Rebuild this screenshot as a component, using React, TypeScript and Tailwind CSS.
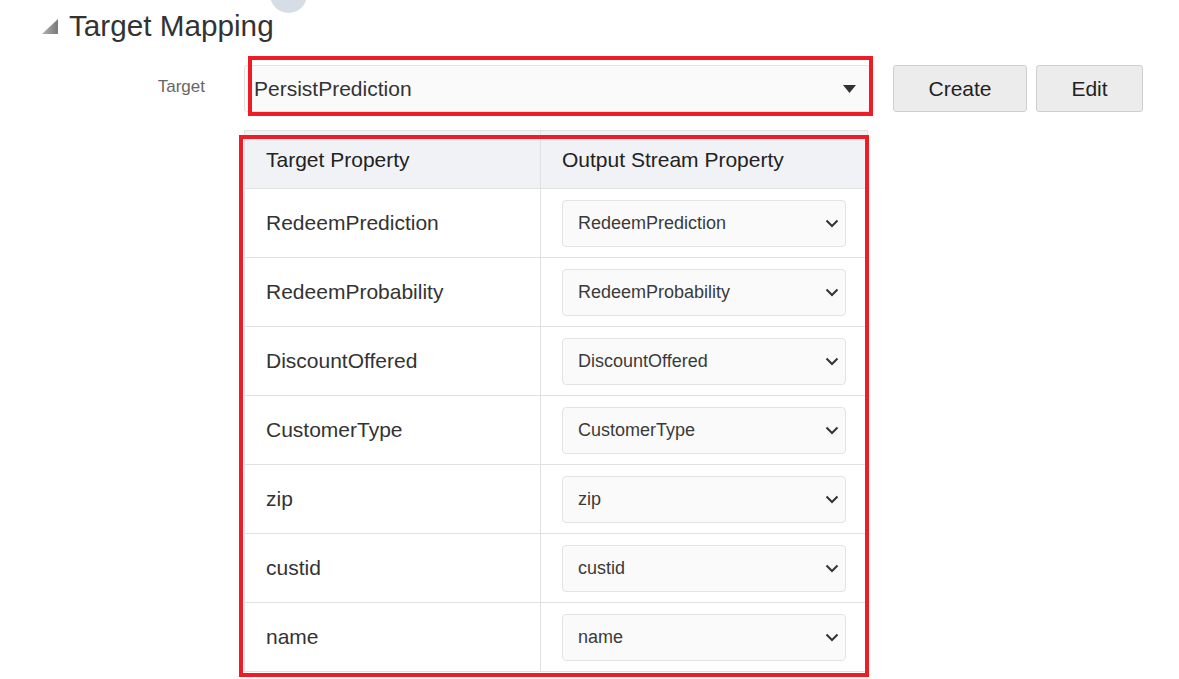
import React from 'react';

const rows = [
  'RedeemPrediction',
  'RedeemProbability',
  'DiscountOffered',
  'CustomerType',
  'zip',
  'custid',
  'name',
];

function Chevron() {
  return (
    <svg width="14" height="9" viewBox="0 0 14 9" fill="none">
      <polyline points="1.5,1.5 7,7 12.5,1.5" stroke="#333" strokeWidth="2" />
    </svg>
  );
}

function SmallSelect({ value }: { value: string }) {
  return (
    <div className="flex h-[47px] w-[284px] items-center justify-between rounded-[4px] border border-[#e3e3e3] bg-[#fafafa] pl-[15px] pr-[6px]">
      <span className="text-[18px] text-[#3a3a3a]">{value}</span>
      <Chevron />
    </div>
  );
}

export default function App() {
  return (
    <div
      className="relative h-[679px] w-full overflow-hidden bg-white"
      style={{ fontFamily: '"Liberation Sans", Arial, sans-serif' }}
    >
      <div className="absolute left-[270px] top-[-24px] h-[37px] w-[37px] rounded-full bg-[#d6dde5]" />

      <div className="flex items-center pt-[10px]">
        <svg width="16" height="15" viewBox="0 0 16 15" className="ml-[42px] mt-[1px]">
          <defs>
            <linearGradient id="tri" x1="0" y1="0" x2="1" y2="0">
              <stop offset="0" stopColor="#b0b0b0" />
              <stop offset="1" stopColor="#7a7a7a" />
            </linearGradient>
          </defs>
          <polygon points="16,0 16,15 0,15" fill="url(#tri)" />
        </svg>
        <h2 className="ml-[11px] text-[29.7px] leading-[32px] text-[#333]">Target Mapping</h2>
      </div>

      <div className="mt-[23px] flex items-center">
        <div className="-mt-[3px] w-[205px] text-right text-[17px] text-[#666]">Target</div>
        <div className="relative ml-[39px]">
          <div className="flex h-[47px] w-[626px] items-center justify-between rounded-[3px] border border-[#e3e3e3] bg-[#fafafa] pl-[9px] pr-[13px]">
            <span className="text-[21px] text-[#333]">PersistPrediction</span>
            <svg width="13" height="8" viewBox="0 0 13 8">
              <polygon points="0,0 13,0 6.5,8" fill="#333" />
            </svg>
          </div>
          <div className="pointer-events-none absolute left-[4px] top-[-9px] h-[60px] w-[625px] border-4 border-[#ee1c25]" />
        </div>
        <button className="ml-[23px] h-[47px] w-[134px] rounded-[3px] border border-[#cfcfcf] bg-[#ececec] text-[21px] text-[#222]">
          Create
        </button>
        <button className="ml-[9px] h-[47px] w-[107px] rounded-[3px] border border-[#cfcfcf] bg-[#ececec] text-[21px] text-[#222]">
          Edit
        </button>
      </div>

      <div className="relative ml-[244px] mt-[18px] w-[624px] border border-[#e1e1e1]">
        <div className="flex h-[58px] border-b border-[#e1e1e1] bg-[#f1f2f6] text-[21px] text-[#222]">
          <div className="flex w-[296px] items-center border-r border-[#e1e1e1] pl-[21px]">Target Property</div>
          <div className="flex flex-1 items-center pl-[21px]">Output Stream Property</div>
        </div>
        {rows.map((r, i) => (
          <div
            key={r}
            className={`flex ${i < rows.length - 1 ? 'h-[69px] border-b border-[#e1e1e1]' : 'h-[68px]'}`}
          >
            <div className="flex w-[296px] items-center border-r border-[#e1e1e1] pl-[21px] text-[21px] text-[#333]">
              {r}
            </div>
            <div className="flex flex-1 items-center pl-[21px]">
              <SmallSelect value={r} />
            </div>
          </div>
        ))}
        <div className="pointer-events-none absolute left-[-6px] top-[4px] h-[542px] w-[630px] border-4 border-[#ee1c25]" />
      </div>
    </div>
  );
}
